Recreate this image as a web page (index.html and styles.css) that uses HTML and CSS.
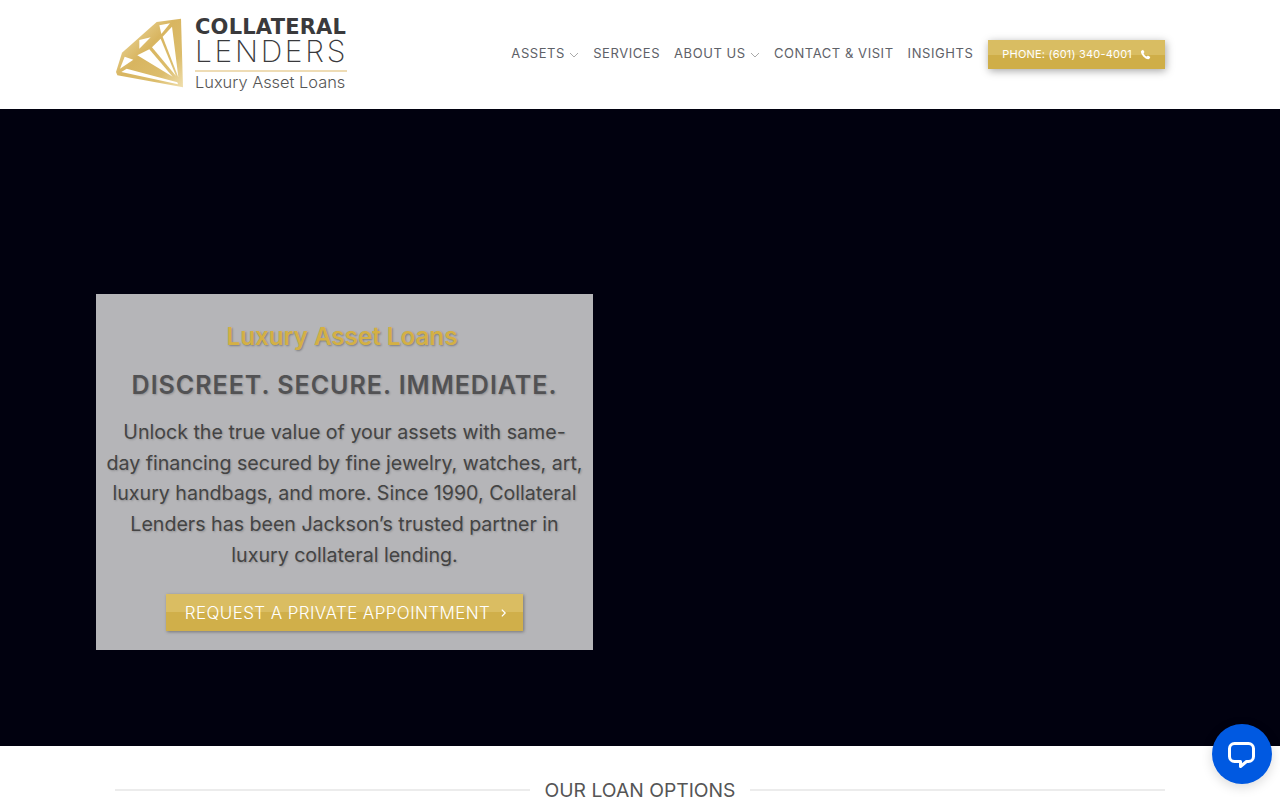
FILE: index.html
```html
<!DOCTYPE html>
<html lang="en">
<head>
    <meta charset="UTF-8">
    <meta name="viewport" content="width=device-width, initial-scale=1.0">
    <title>Collateral Lenders - Luxury Asset Loans</title>
    <link rel="stylesheet" href="styles.css">
</head>
<body>

    <!-- Header -->
    <header class="header">
        <a class="logo" href="#">
            <svg class="logo-mark" viewBox="0 0 240 240" width="80" height="80">
                <defs>
                    <linearGradient id="gold" x1="0" y1="0" x2="1" y2="1">
                        <stop offset="0" stop-color="#f3e4b4"/>
                        <stop offset="0.45" stop-color="#d8b560"/>
                        <stop offset="0.75" stop-color="#dcbd6c"/>
                        <stop offset="1" stop-color="#f0dfae"/>
                    </linearGradient>
                </defs>
                <polygon class="mark-fill" points="18,180 36,122 140,30 213,20 219,226 22,190"/>
                <polygon class="mark-cut" points="148,40 180,34 154,66"/>
                <polygon class="mark-cut" points="88,84 122,76 88,110"/>
                <polygon class="mark-cut" points="158,74 186,44 205,196"/>
                <polygon class="mark-cut" points="126,106 152,80 198,192"/>
                <polygon class="mark-cut" points="44,134 70,143 30,170"/>
                <polygon class="mark-cut" points="82,130 118,112 188,194"/>
                <polygon class="mark-cut" points="34,180 50,170 202,211 204,217"/>
            </svg>
            <span class="logo-text">
                <span class="logo-top">COLLATERAL</span>
                <span class="logo-mid">LENDERS</span>
                <span class="logo-sub">Luxury Asset Loans</span>
            </span>
        </a>
        <nav class="nav">
            <a href="#">ASSETS <svg class="caret" viewBox="0 0 10 6" width="10" height="6"><polyline points="1,1 5,5 9,1"/></svg></a>
            <a href="#">SERVICES</a>
            <a href="#">ABOUT US <svg class="caret" viewBox="0 0 10 6" width="10" height="6"><polyline points="1,1 5,5 9,1"/></svg></a>
            <a href="#">CONTACT &amp; VISIT</a>
            <a href="#">INSIGHTS</a>
            <a class="phone-btn" href="#">PHONE: (601) 340-4001
                <svg viewBox="0 0 24 24" width="11" height="11"><path d="M6.600 1.500l3.200 5.200-2 2.600c.9 2.800 3.700 5.900 6.900 7l2.500-2 5.300 3.300-2 3.900c-.6.8-1.600 1.100-2.600.9C10.300 21 3.400 13.700 2 6.400c-.2-1 .2-2 1-2.600z"/></svg>
            </a>
        </nav>
    </header>

    <!-- Hero -->
    <section class="hero">
        <div class="hero-card">
            <h2 class="hero-title">Luxury Asset Loans</h2>
            <h3 class="hero-sub">DISCREET. SECURE. IMMEDIATE.</h3>
            <p class="hero-text">Unlock the true value of your assets with same-<br>day financing secured by fine jewelry, watches, art, luxury handbags, and more. Since 1990, Collateral Lenders has been Jackson’s trusted partner in luxury collateral lending.</p>
            <a class="hero-btn" href="#">REQUEST A PRIVATE APPOINTMENT
                <svg viewBox="0 0 8 12" width="7" height="10"><polyline points="2,2 6,6 2,10"/></svg>
            </a>
        </div>
    </section>

    <!-- Loan options -->
    <section class="loans">
        <div class="section-title"><span>OUR LOAN OPTIONS</span></div>
    </section>

    <!-- Chat bubble -->
    <a class="chat" href="#">
        <svg viewBox="0 0 60 60" width="60" height="60">
            <path d="M22.500 19.500h14a5 5 0 0 1 5 5v8a5 5 0 0 1-5 5h-2l-6 5v-5h-6a5 5 0 0 1-5-5v-8a5 5 0 0 1 5-5z"/>
        </svg>
    </a>

</body>
</html>
```

FILE: styles.css
```css
* {
    box-sizing: border-box;
}
html, body {
    height: 100%;
}
body {
    margin: 0;
    font-family: Inter, "Open Sans", sans-serif;
    background-color: #fff;
    overflow: hidden;
}
a {
    text-decoration: none;
    color: inherit;
}

/* Header */
.header {
    height: 109px;
    padding: 12px 115px 0 115px;
    display: flex;
    justify-content: space-between;
}
.logo {
    display: flex;
    align-items: flex-start;
    gap: 5px;
}
.logo-mark {
    margin-left: -5px;
    flex-shrink: 0;
}
.mark-fill {
    fill: url(#gold);
}
.mark-cut {
    fill: #fff;
}
.logo-text {
    display: flex;
    flex-direction: column;
    width: 152px;
    margin-top: 5px;
    color: #3a3a3c;
}
.logo-top {
    font-family: "DejaVu Sans", sans-serif;
    font-size: 21px;
    font-weight: 700;
    line-height: 21px;
    letter-spacing: 0.2px;
    white-space: nowrap;
}
.logo-mid {
    font-size: 30px;
    font-weight: 200;
    line-height: 27px;
    letter-spacing: 2.700px;
    padding-bottom: 5px;
    border-bottom: 2px solid #eedcb5;
}
.logo-sub {
    font-size: 16.400px;
    font-weight: 300;
    line-height: 20px;
    color: #555;
    white-space: nowrap;
}
.nav {
    display: flex;
    align-items: flex-start;
    gap: 14px;
    padding-top: 28px;
    font-size: 13px;
    letter-spacing: 0.56px;
    color: #5e6168;
}
.nav > a {
    line-height: 27px;
    white-space: nowrap;
}
.caret {
    fill: none;
    stroke: #aaa;
    stroke-width: 1;
}
.nav .phone-btn {
    display: flex;
    align-items: center;
    gap: 8px;
    height: 29px;
    margin-left: 1px;
    padding: 0 14px;
    font-size: 11px;
    line-height: 29px;
    letter-spacing: 0.2px;
    color: #fff;
    background: linear-gradient(#d9bd62 50%, #cfae48 50%);
    box-shadow: 1px 2px 8px rgba(0, 0, 0, 0.35);
}
.phone-btn svg {
    fill: #fff;
}

/* Hero */
.hero {
    height: 637px;
    padding-top: 185px;
    padding-left: 96px;
    background-color: #01010f;
}
.hero-card {
    width: 497px;
    height: 356px;
    padding: 25px 6px 0 6px;
    text-align: center;
    background-color: #b5b5b8;
}
.hero-title {
    margin: 0;
    padding-right: 5px;
    font-size: 24.200px;
    font-weight: 600;
    line-height: 36px;
    color: #d4b044;
    text-shadow: 1px 1px 2px rgba(0, 0, 0, 0.3);
}
.hero-sub {
    margin: 12px 0 0 0;
    font-size: 25px;
    font-weight: 600;
    line-height: 36px;
    letter-spacing: 1px;
    color: #525254;
    text-shadow: 1px 1px 2px rgba(0, 0, 0, 0.2);
}
.hero-text {
    margin: 14px 0 0 0;
    font-size: 19.600px;
    line-height: 30.700px;
    color: #444;
    text-shadow: 1px 1px 2px rgba(0, 0, 0, 0.2);
}
.hero-btn {
    display: inline-flex;
    align-items: center;
    gap: 10px;
    height: 37px;
    margin-top: 23px;
    padding: 1px 16px 0 19px;
    font-size: 17px;
    font-weight: 300;
    letter-spacing: 0.4px;
    color: #fff;
    background: linear-gradient(#dabd62 50%, #d0af4a 50%);
    box-shadow: 1px 1px 3px rgba(0, 0, 0, 0.35);
}
.hero-btn svg {
    fill: none;
    stroke: #fff;
    stroke-width: 1.5;
}

/* Loan options */
.loans {
    padding: 33px 115px 0 115px;
}
.section-title {
    display: flex;
    align-items: center;
    gap: 15px;
    font-size: 19.300px;
    line-height: 22px;
    color: #555;
}
.section-title::before, .section-title::after {
    content: "";
    flex: 1;
    height: 2px;
    background-color: #ececec;
}

/* Chat bubble */
.chat {
    position: fixed;
    right: 8px;
    bottom: 16px;
    width: 60px;
    height: 60px;
    border-radius: 50%;
    background-color: #0059e1;
    box-shadow: 0 3px 12px rgba(0, 0, 0, 0.15);
}
.chat svg {
    fill: none;
    stroke: #fff;
    stroke-width: 3;
    stroke-linejoin: round;
}
```
